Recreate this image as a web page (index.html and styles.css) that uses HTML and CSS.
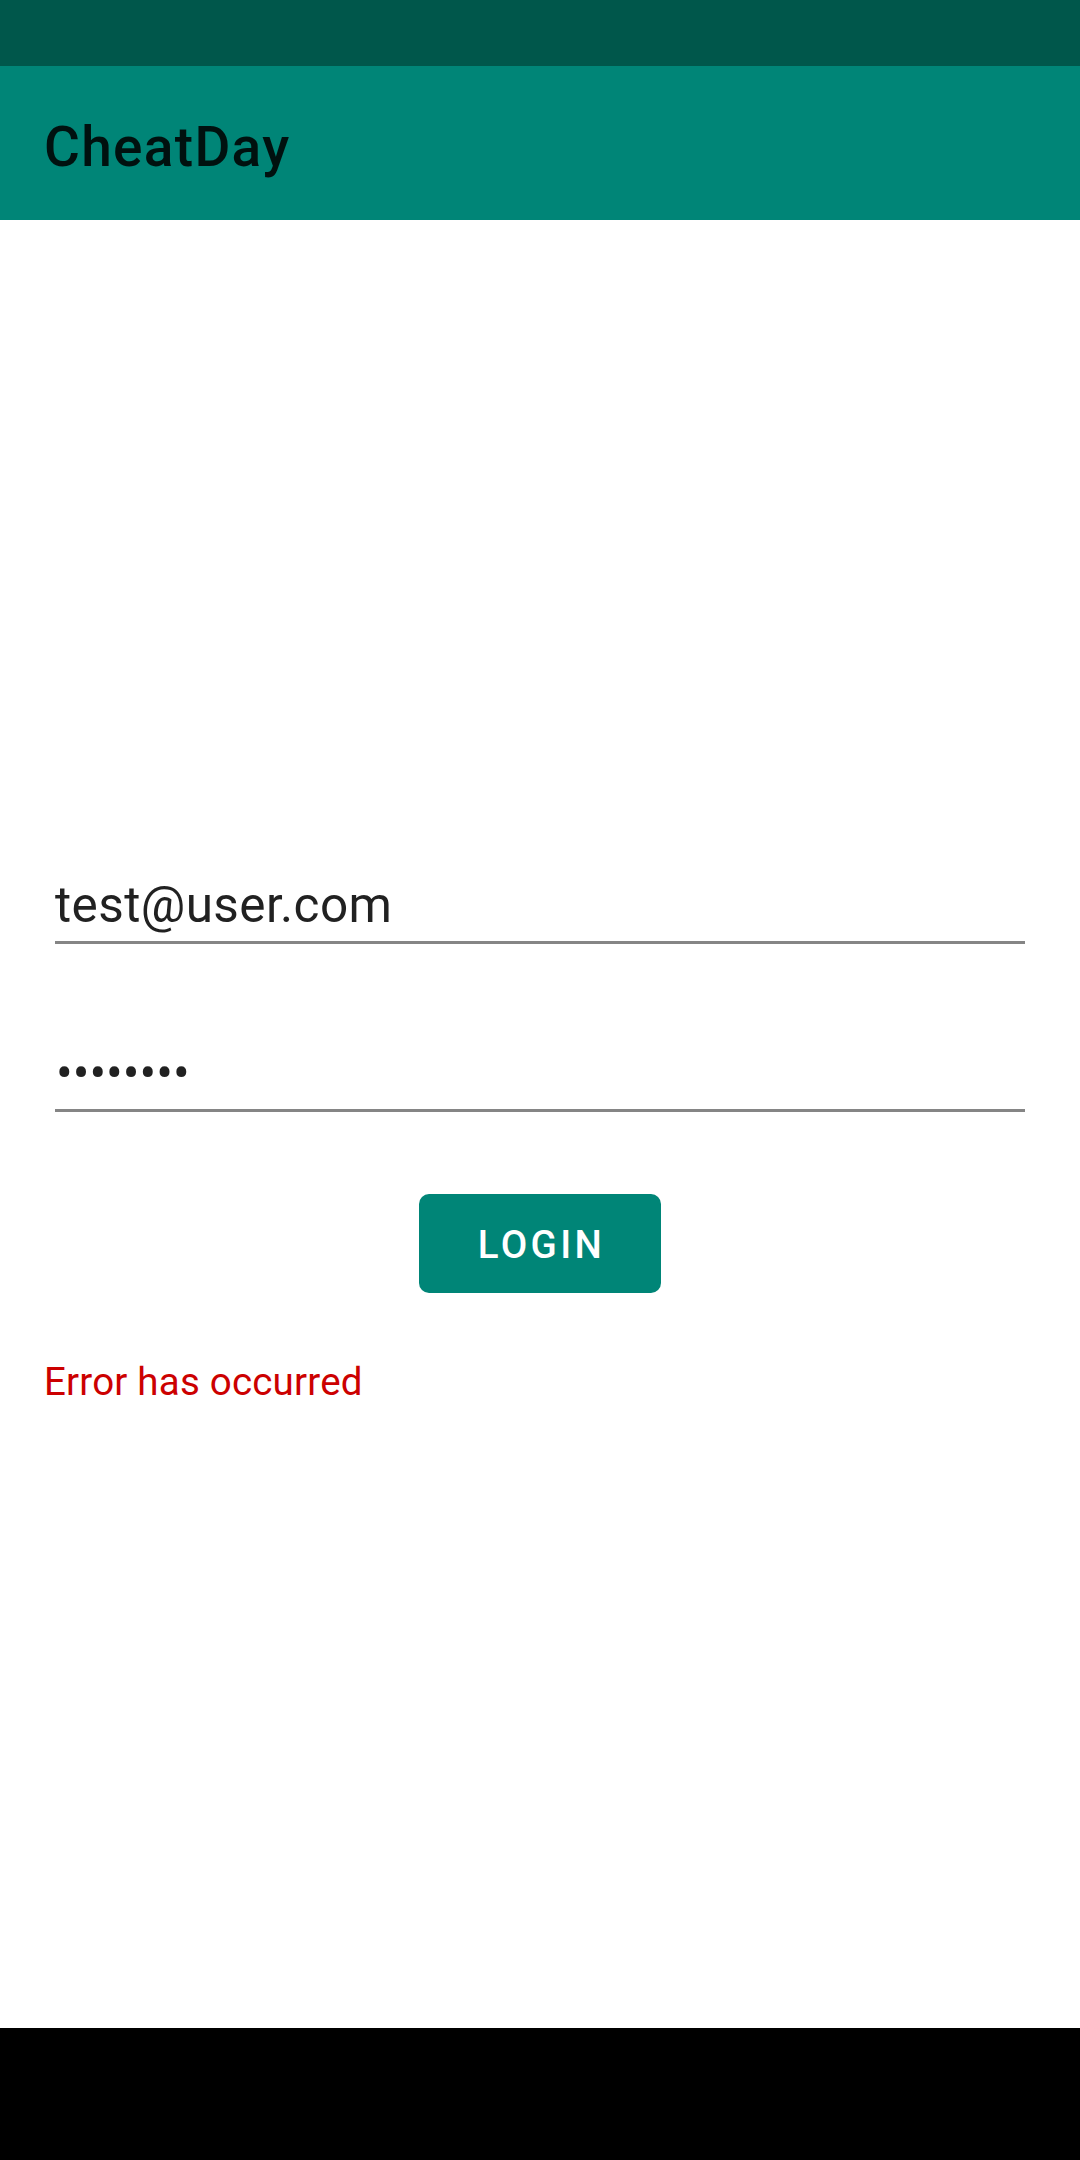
FILE: index.html
```
<!DOCTYPE html>
<html lang="en">
<head>
<meta charset="utf-8">
<title>CheatDay</title>
<link rel="stylesheet" href="styles.css">
</head>
<body>
<div class="screen">
  <div class="status-bar"></div>
  <header class="app-bar">
    <h1 class="app-title">CheatDay</h1>
  </header>
  <main class="content">
    <div class="field field-email">
      <span class="field-text">test@user.com</span>
    </div>
    <div class="field field-password">
      <span class="field-text dots">••••••••</span>
    </div>
    <div class="button-row">
      <button class="login-btn" type="button">LOGIN</button>
    </div>
    <p class="error">Error has occurred</p>
  </main>
  <div class="nav-bar"></div>
</div>
</body>
</html>
```

FILE: styles.css
```
html, body {
  margin: 0;
  padding: 0;
  background: #ffffff;
}

body {
  font-family: Roboto, "Liberation Sans", sans-serif;
}

.screen {
  width: 1080px;
  height: 2160px;
  display: flex;
  flex-direction: column;
  overflow: hidden;
}

.status-bar {
  height: 66px;
  flex: 0 0 66px;
  background: #00574B;
}

.app-bar {
  height: 154px;
  flex: 0 0 154px;
  background: #008577;
  display: flex;
  align-items: flex-start;
  padding-left: 44px;
  box-sizing: border-box;
}

.app-title {
  margin: 49px 0 0 0;
  font-size: 55px;
  line-height: 64px;
  font-weight: 500;
  letter-spacing: 1.3px;
  color: rgba(0, 0, 0, 0.87);
}

.content {
  flex: 1 1 auto;
  display: flex;
  flex-direction: column;
  padding: 0 44px;
}

.field {
  margin: 0 11px;
  padding-bottom: 7px;
  border-bottom: 3px solid #858585;
}

.field-email {
  margin-top: 656px;
}

.field-password {
  margin-top: 100px;
}

.field-text {
  display: block;
  font-size: 49.5px;
  line-height: 58px;
  letter-spacing: 0.4px;
  color: rgba(0, 0, 0, 0.87);
}

.dots {
  padding-left: 1px;
  letter-spacing: 0px;
}

.button-row {
  display: flex;
  justify-content: center;
  margin-top: 82px;
}

.login-btn {
  width: 242px;
  height: 99px;
  border: none;
  border-radius: 10px;
  background: #008577;
  color: #ffffff;
  font-family: Roboto, "Liberation Sans", sans-serif;
  font-size: 38.5px;
  font-weight: 500;
  letter-spacing: 3.4px;
  padding: 2px 0 0 3px;
}

.error {
  margin: 66px 0 0 0;
  font-size: 38.5px;
  line-height: 45px;
  letter-spacing: 0.2px;
  color: #CC0000;
}

.nav-bar {
  height: 132px;
  flex: 0 0 132px;
  background: #000000;
}
```
